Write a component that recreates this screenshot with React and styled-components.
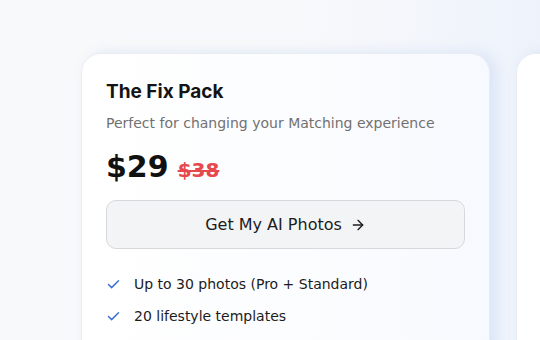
import React from "react";
import styled, { createGlobalStyle } from "styled-components";
import { ArrowRight } from "lucide-react";

const GlobalStyle = createGlobalStyle`
  html, body {
    margin: 0;
    padding: 0;
  }
  body {
    font-family: "DejaVu Sans", sans-serif;
    background: #f8f9fa;
  }
`;

const plans = [
  {
    name: "The Fix Pack",
    blurb: "Perfect for changing your Matching experience",
    price: "$29",
    oldPrice: "$38",
    features: ["Up to 30 photos (Pro + Standard)", "20 lifestyle templates"],
  },
  {
    name: "The Glow Up",
    blurb: "Everything you need to stand out",
    price: "$49",
    oldPrice: "$64",
    features: ["Up to 60 photos", "40 lifestyle templates"],
  },
];

const Check = () => (
  <svg width="15" height="15" viewBox="0 0 24 24" fill="none" stroke="#3b6fd8" strokeWidth="2.3" strokeLinecap="round" strokeLinejoin="round">
    <path d="M20 6 9 17l-5-5" />
  </svg>
);

const App = () => {
  return (
    <Page>
      <GlobalStyle />
      <Row>
        {plans.map((p) => (
          <Card key={p.name}>
            <Title>{p.name}</Title>
            <Blurb>{p.blurb}</Blurb>
            <PriceRow>
              <Price>{p.price}</Price>
              <OldPrice>{p.oldPrice}</OldPrice>
            </PriceRow>
            <Button>
              Get My AI Photos
              <ArrowRight size={16} strokeWidth={2} />
            </Button>
            <Features>
              {p.features.map((f) => (
                <li key={f}>
                  <Check />
                  <span>{f}</span>
                </li>
              ))}
            </Features>
          </Card>
        ))}
      </Row>
    </Page>
  );
};

const Page = styled.div`
  width: 540px;
  height: 340px;
  overflow: hidden;
  background: linear-gradient(90deg, #f8f9fa 0%, #f8f9fb 55%, #eef3fb 100%);
`;

const Row = styled.div`
  display: flex;
  gap: 26px;
  padding: 53px 0 0 81px;
`;

const Card = styled.div`
  flex: 0 0 409px;
  box-sizing: border-box;
  height: 320px;
  padding: 24px 24px;
  border-radius: 20px;
  border: 1px solid #e9edf3;
  background: linear-gradient(90deg, #ffffff 0%, #fbfcfe 60%, #f6f9fe 100%);
  box-shadow: 6px 0 14px rgba(190, 208, 240, 0.45);
`;

const Title = styled.h2`
  margin: 0;
  font-family: Inter, "Liberation Sans", sans-serif;
  font-weight: 700;
  font-size: 19px;
  line-height: 26px;
  color: #141414;
  padding-top: 1px;
`;

const Blurb = styled.p`
  margin: 8px 0 0;
  font-size: 14px;
  line-height: 20px;
  color: #717171;
`;

const PriceRow = styled.div`
  display: flex;
  align-items: baseline;
  gap: 9px;
  margin-top: 14px;
`;

const Price = styled.span`
  font-size: 30px;
  font-weight: 700;
  line-height: 40px;
  color: #111;
`;

const OldPrice = styled.span`
  font-size: 20px;
  font-weight: 700;
  color: #e5484d;
  text-decoration: line-through;
`;

const Button = styled.button`
  display: flex;
  align-items: center;
  justify-content: center;
  gap: 8px;
  width: 100%;
  height: 49px;
  margin-top: 13px;
  border-radius: 10px;
  border: 1px solid #d6d8dc;
  background: #f3f4f6;
  font-family: "DejaVu Sans", sans-serif;
  font-size: 16px;
  color: #1c1c1c;
  cursor: pointer;
`;

const Features = styled.ul`
  list-style: none;
  margin: 25px 0 0;
  padding: 0;
  display: flex;
  flex-direction: column;
  gap: 12px;

  li {
    display: flex;
    align-items: center;
    gap: 13px;
    font-size: 14px;
    line-height: 20px;
    color: #1c1c1c;
  }
`;

export default App;
